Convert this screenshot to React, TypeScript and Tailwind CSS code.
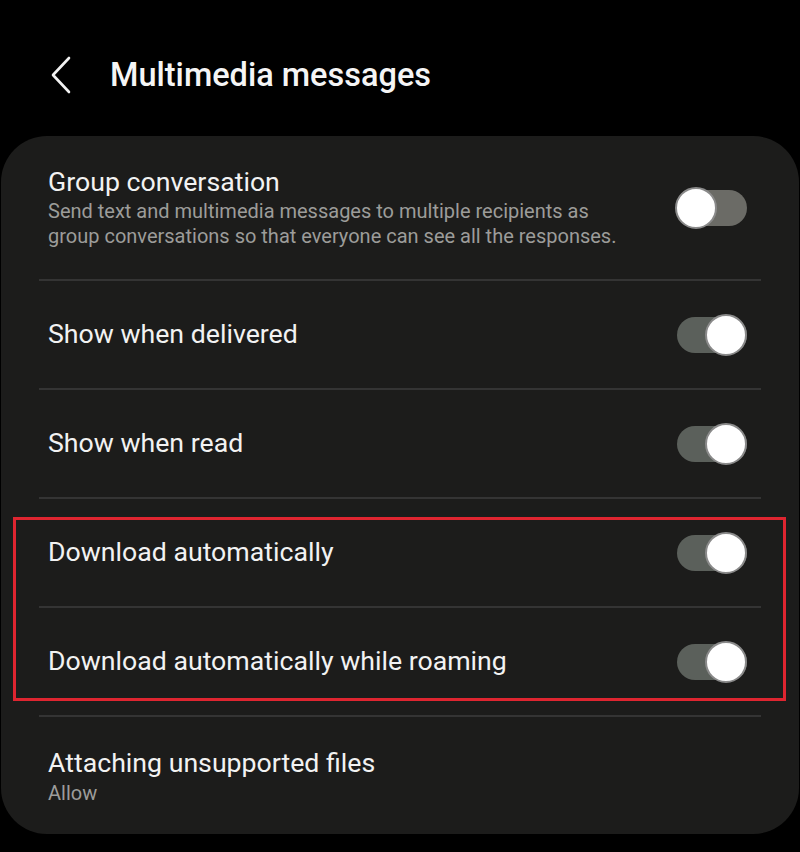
import React from "react";

type Row = {
  title: string;
  subtitle?: string;
  on?: boolean;
  toggle?: boolean;
};

const Toggle = ({ on }: { on: boolean }) => (
  <div className="relative h-[42px] w-[72px] shrink-0">
    <div
      className={`absolute left-[2px] top-[3px] h-[36px] w-[70px] rounded-full ${
        on ? "bg-[#5b605b]" : "bg-[#6b6b66]"
      }`}
    />
    <div
      className={`absolute top-0 h-[42px] w-[42px] rounded-full border-2 border-[#8a8a8a] bg-white ${
        on ? "left-[30px]" : "left-0"
      }`}
    />
  </div>
);

const Divider = () => <div className="mx-[38px] h-[2px] bg-[#343434]" />;

const SwitchRow = ({ row }: { row: Row }) => (
  <div className="flex h-[107px] items-center justify-between pl-[47px] pr-[52px]">
    <span className="text-[26.7px] text-[#f2f2f2]">{row.title}</span>
    <Toggle on={!!row.on} />
  </div>
);

const App = () => {
  return (
    <div
      className="h-[852px] w-[800px] overflow-hidden bg-black"
      style={{ fontFamily: "Roboto, 'Noto Sans', sans-serif" }}
    >
      {/* header */}
      <div className="flex h-[136px] items-center pt-[14px]">
        <svg
          className="ml-[50px] mr-[38px]"
          width="22"
          height="38"
          viewBox="0 0 22 38"
          fill="none"
          stroke="#f2f2f2"
          strokeWidth="2.6"
          strokeLinecap="round"
          strokeLinejoin="round"
        >
          <path d="M19 2 L3 19 L19 36" />
        </svg>
        <h1 className="text-[32.5px] font-medium text-[#f5f5f5]">
          Multimedia messages
        </h1>
      </div>

      {/* card */}
      <div className="mx-[1px] rounded-[46px] bg-[#1c1c1b]">
        <div className="flex h-[143px] items-center justify-between pl-[47px] pr-[52px]">
          <div className="flex flex-col">
            <span className="text-[26.7px] leading-[30px] text-[#f2f2f2]">
              Group conversation
            </span>
            <span className="mt-[2px] w-[590px] text-[20px] leading-[25px] text-[#9c9c9a]">
              Send text and multimedia messages to multiple recipients as
              group conversations so that everyone can see all the responses.
            </span>
          </div>
          <Toggle on={false} />
        </div>
        <Divider />
        <SwitchRow row={{ title: "Show when delivered", on: true }} />
        <Divider />
        <SwitchRow row={{ title: "Show when read", on: true }} />
        <Divider />
        <div className="relative">
          <SwitchRow row={{ title: "Download automatically", on: true }} />
          <Divider />
          <SwitchRow
            row={{ title: "Download automatically while roaming", on: true }}
          />
          {/* annotation frame */}
          <div className="pointer-events-none absolute top-[18px] bottom-[14px] left-[12px] right-[13px] border-[3px] border-[#de2530]" />
        </div>
        <Divider />
        <div className="flex h-[117px] flex-col justify-center pl-[47px] pt-[2px]">
          <span className="text-[26.7px] leading-[30px] text-[#f2f2f2]">
            Attaching unsupported files
          </span>
          <span className="mt-[3px] text-[20px] leading-[25px] text-[#9c9c9a]">
            Allow
          </span>
        </div>
      </div>
    </div>
  );
};

export default App;
